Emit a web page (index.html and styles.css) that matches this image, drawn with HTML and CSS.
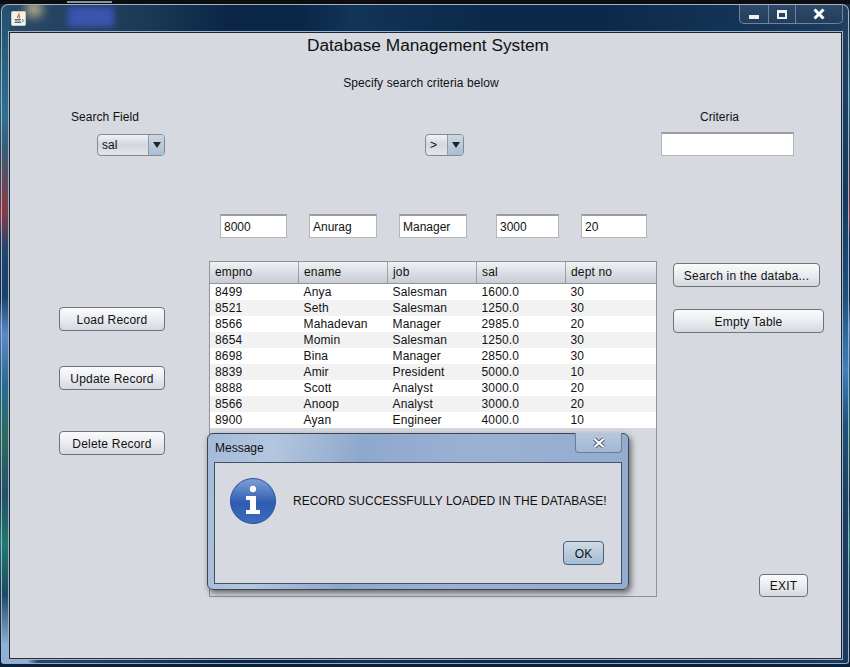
FILE: index.html
```html
<!DOCTYPE html>
<html>
<head>
    <meta charset="UTF-8">
    <title>Database Management System</title>
    <link rel="stylesheet" href="styles.css">
</head>
<body>
    <div class="desktop">
        <div class="ventana">
            <div class="barra">
                <svg class="icono-java" width="15" height="15" viewBox="0 0 15 15">
                    <rect x="0.5" y="0.5" width="14" height="14" rx="1" fill="#f4f2ec" stroke="#c9c6bb"/>
                    <path d="M8 2C9 4 6 5 6.500 7M9 4.500C8 6 8 6.500 8.500 7.500" fill="none" stroke="#d9641e" stroke-width="1.200"/>
                    <path d="M3.500 8.500H10M4 10H9.500M3.500 11.500H10M11 8.500C13 8.500 13 10.500 10.500 11" fill="none" stroke="#4d6f9c" stroke-width="1"/>
                </svg>
                <div class="controles">
                    <span class="ctl ctl-min"><i></i></span>
                    <span class="ctl ctl-max"><i></i></span>
                    <span class="ctl ctl-cerrar">
                        <svg width="14" height="12" viewBox="0 0 14 12"><path d="M2.500 1.500L11.500 10.500M11.500 1.500L2.500 10.500" stroke="#fff" stroke-width="3"/></svg>
                    </span>
                </div>
            </div>
            <div class="panel">
                <h1 class="titulo">Database Management System</h1>
                <p class="subtitulo">Specify search criteria below</p>

                <div class="criterios">
                    <div class="campo campo-buscar">
                        <label class="etiqueta">Search Field</label>
                        <div class="combo combo-campo"><span>sal</span><b class="flecha"></b></div>
                    </div>
                    <div class="combo combo-op"><span>&gt;</span><b class="flecha"></b></div>
                    <div class="campo campo-criterio">
                        <label class="etiqueta">Criteria</label>
                        <input class="texto texto-criterio" type="text">
                    </div>
                </div>

                <div class="fila-datos">
                    <input class="texto t-empno" type="text" value="8000">
                    <input class="texto t-ename" type="text" value="Anurag">
                    <input class="texto t-job" type="text" value="Manager">
                    <input class="texto t-sal" type="text" value="3000">
                    <input class="texto t-dept" type="text" value="20">
                </div>

                <div class="principal">
                    <div class="col-izq">
                        <button class="boton">Load Record</button>
                        <button class="boton">Update Record</button>
                        <button class="boton">Delete Record</button>
                    </div>
                    <div class="area-tabla">
                        <table class="tabla">
                            <colgroup>
                                <col class="col-a"><col class="col-n"><col class="col-n"><col class="col-n"><col>
                            </colgroup>
                            <thead>
                                <tr><th>empno</th><th>ename</th><th>job</th><th>sal</th><th>dept no</th></tr>
                            </thead>
                            <tbody>
                                <tr><td>8499</td><td>Anya</td><td>Salesman</td><td>1600.0</td><td>30</td></tr>
                                <tr><td>8521</td><td>Seth</td><td>Salesman</td><td>1250.0</td><td>30</td></tr>
                                <tr><td>8566</td><td>Mahadevan</td><td>Manager</td><td>2985.0</td><td>20</td></tr>
                                <tr><td>8654</td><td>Momin</td><td>Salesman</td><td>1250.0</td><td>30</td></tr>
                                <tr><td>8698</td><td>Bina</td><td>Manager</td><td>2850.0</td><td>30</td></tr>
                                <tr><td>8839</td><td>Amir</td><td>President</td><td>5000.0</td><td>10</td></tr>
                                <tr><td>8888</td><td>Scott</td><td>Analyst</td><td>3000.0</td><td>20</td></tr>
                                <tr><td>8566</td><td>Anoop</td><td>Analyst</td><td>3000.0</td><td>20</td></tr>
                                <tr><td>8900</td><td>Ayan</td><td>Engineer</td><td>4000.0</td><td>10</td></tr>
                            </tbody>
                        </table>
                    </div>
                    <div class="col-der">
                        <button class="boton btn-buscar">Search in the databa...</button>
                        <button class="boton btn-vaciar">Empty Table</button>
                        <button class="boton btn-salir">EXIT</button>
                    </div>
                </div>
            </div>
        </div>

        <div class="dialogo">
            <div class="dlg-barra">
                <span>Message</span>
                <span class="dlg-cerrar">
                    <svg width="16" height="12" viewBox="0 0 16 12"><path d="M3.500 2L12.500 10M12.500 2L3.500 10" stroke="#4c5a6c" stroke-width="4"/><path d="M3.500 2L12.500 10M12.500 2L3.500 10" stroke="#fff" stroke-width="2.200"/></svg>
                </span>
            </div>
            <div class="dlg-cuerpo">
                <div class="dlg-mensaje">
                    <svg class="icono-info" width="46" height="46" viewBox="0 0 46 46">
                        <defs>
                            <linearGradient id="azul" x1="0" y1="0" x2="0" y2="1">
                                <stop offset="0" stop-color="#7fa0d6"/>
                                <stop offset="0.55" stop-color="#2e5cb0"/>
                                <stop offset="1" stop-color="#3f6cc0"/>
                            </linearGradient>
                        </defs>
                        <circle cx="23" cy="23" r="22.500" fill="url(#azul)" stroke="#2a509c"/>
                        <circle cx="23" cy="11" r="3.200" fill="#fff"/>
                        <path d="M16 18H26V32H30V36H16V32H20V22H16Z" fill="#fff"/>
                    </svg>
                    <p>RECORD SUCCESSFULLY LOADED IN THE DATABASE!</p>
                </div>
                <div class="dlg-acciones">
                    <button class="boton btn-ok">OK</button>
                </div>
            </div>
        </div>
    </div>
</body>
</html>
```

FILE: styles.css
```css
html, body {
    margin: 0;
    padding: 0;
}
body {
    width: 850px;
    height: 667px;
    overflow: hidden;
    background: #08131f;
    font-family: "Liberation Sans", Arial, sans-serif;
    font-size: 12px;
    color: #111;
}
.desktop {
    position: relative;
    width: 850px;
    height: 667px;
    padding-top: 4px;
    box-sizing: border-box;
    background:
        linear-gradient(90deg, transparent 67px, #8a93a3 67px, #8a93a3 112px, transparent 112px) left 1px / 100% 2px no-repeat,
        linear-gradient(180deg, #0d0d10 0, #0d0d10 4px, transparent 4px),
        linear-gradient(180deg, #14283a 0, #1f6d88 100px, #2a3f55 150px, #7a2a30 200px, #a02c34 215px, #15305a 240px, #0e2a48 300px, #4f7ec0 325px, #1a5a86 370px, #1a6a5a 430px, #205a40 445px, #1c3550 500px, #10806a 540px, #14425a 580px, #0c2038 100%);
}
.ventana {
    position: relative;
    width: 848px;
    height: 660px;
    margin-left: 1px;
    box-sizing: border-box;
    padding: 0 6px 4px 7px;
    border: 1px solid #9fb2c6;
    border-bottom-color: #8fa9c9;
    border-radius: 7px 7px 3px 3px;
    overflow: hidden;
    background:
        linear-gradient(90deg, #8fb0d8 0, #8fb0d8 25px, rgba(143,176,216,0) 36px) left bottom / 100% 5px no-repeat,
        linear-gradient(180deg, #24506e 0, #2f6f90 110px, #3c5a72 150px, #8a3a44 205px, #23456e 245px, #17406a 290px, #5c88c8 330px, #2a6a92 380px, #2c6a5c 435px, #24506a 490px, #1f7a6e 540px, #1f4a66 590px, #8fb0d8 640px, #8fb0d8 100%) left top / 8px 100% no-repeat,
        linear-gradient(180deg, #24405e 0, #1d3f60 100px, #123a60 190px, #1f4f78 290px, #3d80bc 365px, #1f5078 420px, #1c3f62 500px, #1c3a5c 100%) right top / 7px 100% no-repeat,
        linear-gradient(90deg, #2a4a68 0, #1c3a58 140px, #0a2545 230px, #0a2748 300px, #123457 350px, #0b2a4b 480px, #0b2a4b 600px, #1b3b5f 100%);
}
.ventana::before {
    content: "";
    position: absolute;
    left: 66px;
    top: 2px;
    width: 46px;
    height: 20px;
    background: #3a54b0;
    filter: blur(3px);
}
.ventana::after {
    content: "";
    position: absolute;
    left: 24px;
    top: -4px;
    width: 16px;
    height: 16px;
    background: #a8a486;
    filter: blur(5px);
}
.barra {
    position: relative;
    z-index: 1;
    height: 27px;
    display: flex;
    align-items: flex-start;
    justify-content: space-between;
}
.icono-java {
    margin: 6px 0 0 2px;
}
.controles {
    display: flex;
    height: 18px;
    margin-right: -1px;
    border: 1px solid #6f8499;
    border-top: 0;
    border-radius: 0 0 5px 5px;
    background: linear-gradient(180deg, #2d4a68, #233e5c);
}
.ctl {
    display: flex;
    align-items: center;
    justify-content: center;
    height: 18px;
    border-right: 1px solid #6f8499;
}
.ctl-min { width: 28px; }
.ctl-max { width: 26px; }
.ctl-cerrar { width: 46px; border-right: 0; }
.ctl-min i {
    display: block;
    width: 10px;
    height: 4px;
    margin-top: 5px;
    background: #eef2f6;
}
.ctl-max i {
    display: block;
    width: 6px;
    height: 4px;
    border: 2px solid #eef2f6;
    border-top-width: 3px;
}
.panel {
    position: relative;
    z-index: 1;
    height: 627px;
    box-sizing: border-box;
    border: 1px solid #1a2330;
    border-bottom-color: #2a3038;
    outline: 1px solid #9fb2c6;
    background: #d6d9e0;
    padding-top: 2px;
}
.titulo {
    margin: 0;
    padding-left: 5px;
    text-align: center;
    font-size: 17.3px;
    line-height: 21px;
    font-weight: normal;
    color: #111;
}
.subtitulo {
    margin: 20px 0 0 0;
    padding-right: 9px;
    text-align: center;
    font-size: 12px;
    line-height: 14px;
    letter-spacing: 0.1px;
}
.criterios {
    display: flex;
    align-items: flex-end;
    height: 66px;
}
.campo {
    display: flex;
    flex-direction: column;
}
.etiqueta {
    line-height: 14px;
    letter-spacing: 0.05px;
}
.campo-buscar {
    margin-left: 61px;
}
.campo-buscar .etiqueta {
    margin-bottom: 10px;
}
.combo {
    display: flex;
    justify-content: space-between;
    height: 20px;
    border: 1px solid #808a96;
    border-radius: 4px;
    background: linear-gradient(180deg, #f1f2f5 0, #d3d6dc 48%, #e4e6ea 100%);
    overflow: hidden;
    line-height: 20px;
}
.combo span {
    padding-left: 4px;
}
.combo-campo {
    width: 66px;
    margin-left: 26px;
}
.combo-op {
    width: 37px;
    margin-left: 260px;
}
.flecha {
    position: relative;
    width: 15px;
    border-left: 1px solid #8c9cad;
    background: linear-gradient(180deg, #cbd7e3, #a9bed2);
}
.flecha::after {
    content: "";
    position: absolute;
    left: 4px;
    top: 7px;
    border: 4px solid transparent;
    border-top: 6px solid #222;
    border-bottom: 0;
}
.campo-criterio {
    margin-left: 197px;
}
.campo-criterio .etiqueta {
    margin-bottom: 8px;
    padding-left: 39px;
}
.texto {
    box-sizing: border-box;
    height: 24px;
    padding: 0 3px;
    border: 1px solid #b4b6ba;
    border-top: 2px solid #9a9ca1;
    background: #fff;
    font-family: "Liberation Sans", Arial, sans-serif;
    font-size: 12px;
    color: #111;
    outline: 0;
}
.texto-criterio {
    width: 133px;
}
.fila-datos {
    display: flex;
    margin-top: 58px;
    padding-left: 210px;
}
.t-empno { width: 67px; }
.t-ename { width: 68px; margin-left: 22px; }
.t-job { width: 68px; margin-left: 22px; }
.t-sal { width: 63px; margin-left: 29px; }
.t-dept { width: 66px; margin-left: 22px; }
.principal {
    display: flex;
    margin-top: 23px;
}
.col-izq {
    width: 106px;
    margin-left: 49px;
    display: flex;
    flex-direction: column;
    padding-top: 46px;
}
.boton {
    height: 24px;
    box-sizing: border-box;
    padding: 1px 0 0 0;
    border: 1px solid #6e7378;
    border-radius: 4px;
    background: linear-gradient(180deg, #fbfbfc 0, #eceef2 45%, #d5d8de 100%);
    font-family: "Liberation Sans", Arial, sans-serif;
    font-size: 12px;
    letter-spacing: 0.2px;
    color: #111;
}
.col-izq .boton + .boton { margin-top: 35px; }
.col-izq .boton:last-child { margin-top: 41px; }
.area-tabla {
    width: 448px;
    height: 336px;
    margin-left: 44px;
    box-sizing: border-box;
    border: 1px solid #8f949b;
    background: #d6d9e0;
}
.tabla {
    width: 446px;
    border-collapse: collapse;
    table-layout: fixed;
}
.col-n { width: 89px; }
.col-a { width: 88.5px; }
.tabla th {
    height: 21px;
    padding: 0 0 0 5px;
    box-sizing: border-box;
    border-right: 1px solid #9ba1a9;
    border-bottom: 1px solid #8f949b;
    background: linear-gradient(180deg, #f0f1f4 0, #d9dce2 55%, #c9ccd3 100%);
    font-weight: normal;
    text-align: left;
    letter-spacing: 0.15px;
}
.tabla th:last-child { border-right: 0; }
.tabla td {
    height: 16px;
    padding: 0 0 0 5px;
    line-height: 16px;
    background: #fff;
    letter-spacing: 0.15px;
}
.tabla tr:nth-child(even) td {
    background: #f2f2f2;
}
.col-der {
    flex: 1;
    padding: 2px 0 0 16px;
    display: flex;
    flex-direction: column;
    align-items: flex-start;
}
.btn-buscar { width: 147px; }
.btn-vaciar { width: 151px; margin-top: 22px; }
.btn-salir { width: 49px; height: 23px; margin-top: 241px; margin-left: 86px; }
.dialogo {
    position: absolute;
    z-index: 2;
    left: 207px;
    top: 433px;
    width: 422px;
    height: 157px;
    box-sizing: border-box;
    padding: 0 6px 6px 6px;
    border: 1px solid #3c4650;
    border-radius: 6px;
    background: linear-gradient(100deg, #a4bad9 0, #b4c6de 15%, #8ea8cc 35%, #9ab1d3 60%, #93abcf 100%);
    box-shadow: 2px 3px 6px rgba(0,0,0,0.55);
}
.dlg-barra {
    position: relative;
    height: 28px;
    line-height: 28px;
    padding-left: 1px;
    color: #111;
}
.dlg-cerrar {
    position: absolute;
    right: 0;
    top: -1px;
    width: 47px;
    height: 20px;
    box-sizing: border-box;
    display: flex;
    align-items: center;
    justify-content: center;
    border: 1px solid #6b7d96;
    border-top: 0;
    border-radius: 0 0 4px 4px;
    background: linear-gradient(180deg, #b6c6de, #a3b7d4);
}
.dlg-cuerpo {
    height: 122px;
    box-sizing: border-box;
    border: 1px solid #3f5068;
    background: #d6d9e0;
}
.dlg-mensaje {
    display: flex;
    align-items: center;
    padding: 15px 0 0 15px;
}
.dlg-mensaje p {
    margin: 0 0 0 17px;
}
.dlg-acciones {
    display: flex;
    justify-content: flex-end;
    margin-top: 17px;
    padding-right: 17px;
}
.btn-ok {
    width: 41px;
    border-color: #4d5f74;
    background: linear-gradient(180deg, #cfdbe7 0, #b9cbdc 50%, #a3bdd6 100%);
}
```
